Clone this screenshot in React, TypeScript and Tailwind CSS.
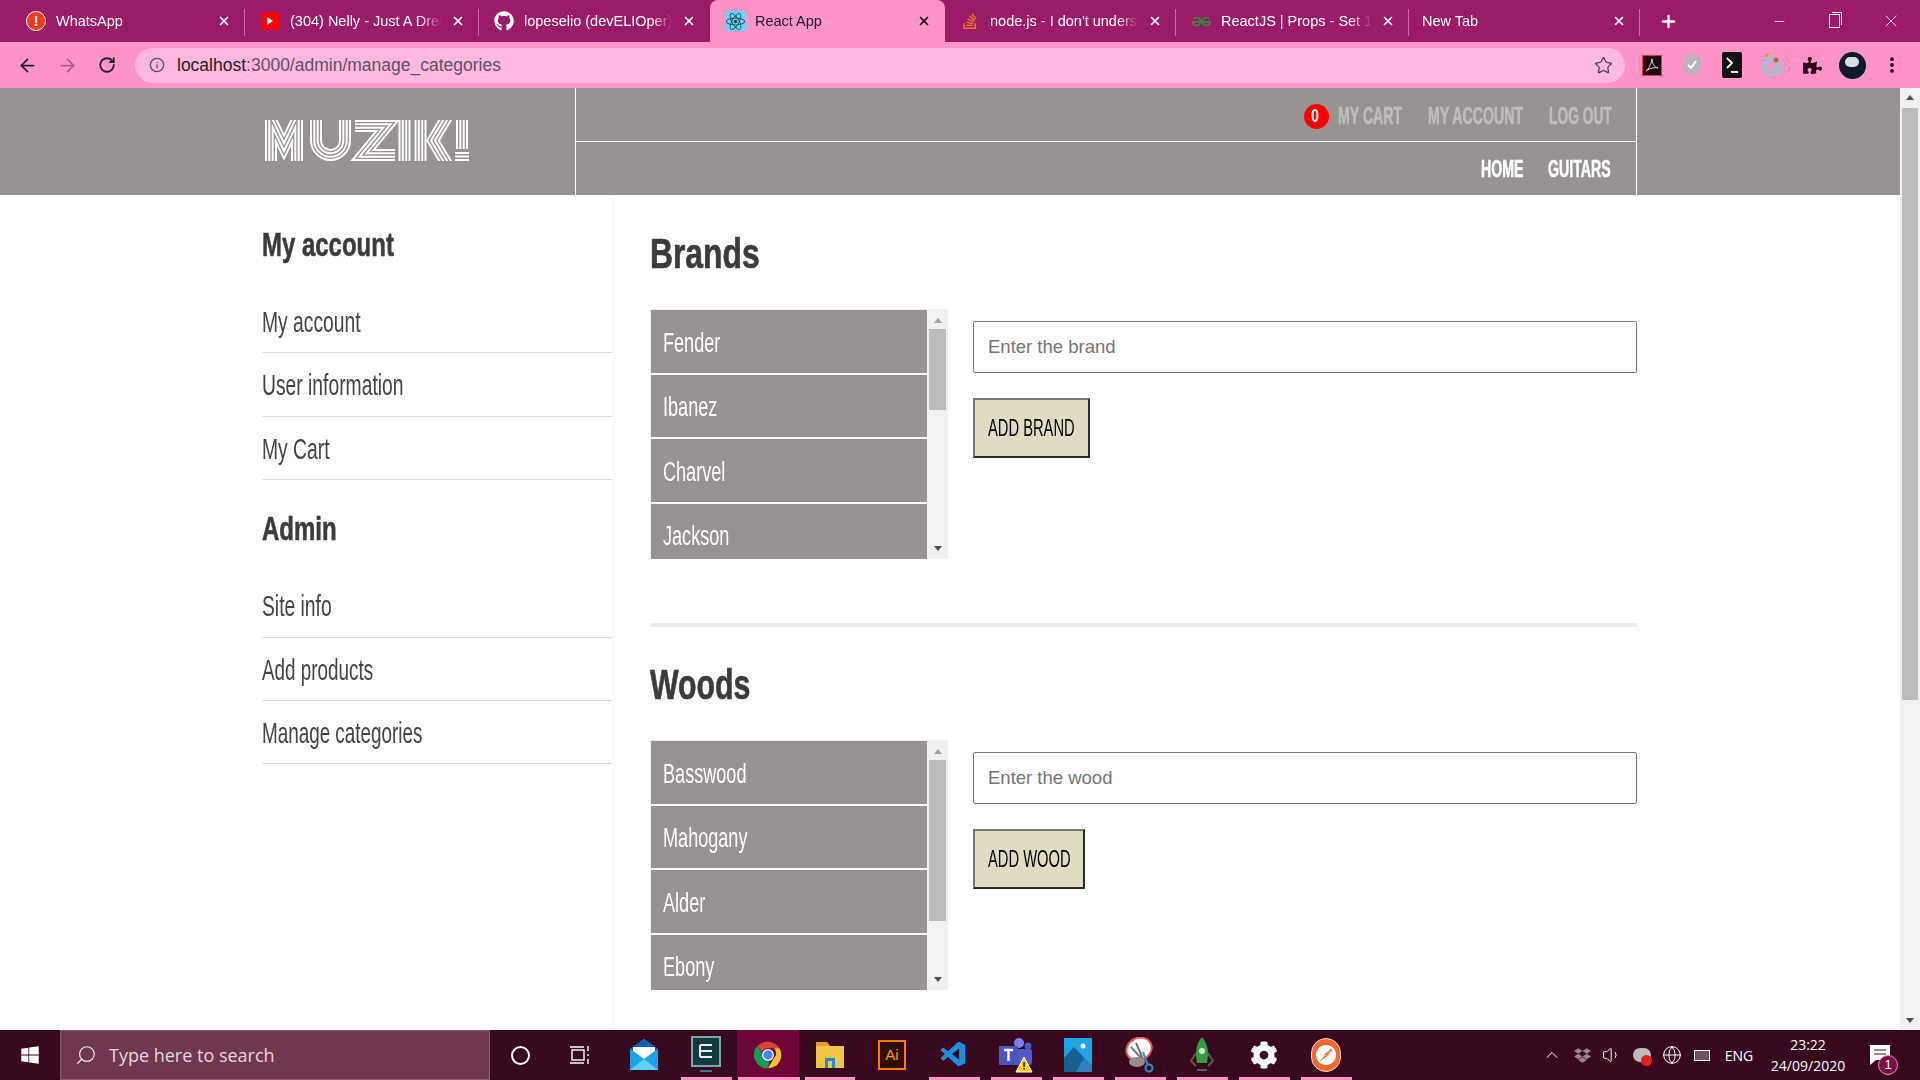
import React from "react";
import { FaGithub, FaReact, FaStackOverflow, FaPuzzlePiece, FaWindows, FaCog, FaDropbox } from "react-icons/fa";
import { SiGeeksforgeeks, SiPostman } from "react-icons/si";
import { VscVscode } from "react-icons/vsc";
import { Minus, X, Plus, ArrowLeft, ArrowRight, RotateCw, Info, Star, Search, ChevronUp, Volume1, Globe, EllipsisVertical } from "lucide-react";

const Logo = () => {
  const widths = [
    ["#ffffff", 12],
    ["#979390", 8],
    ["#ffffff", 5.4],
    ["#979390", 1.4],
  ] as const;
  const d = "M9 45 V0 L22 27 L35 0 V45 M54 -2 V20.5 a14.5 14.5 0 0 0 29 0 V-2 M93 6 H125 L101 35 H133 M142.5 -2 V45 M158.5 -2 V45 M185 -3 L171 20.5 L185 44 M200 -2 V29";
  return (
    <svg width="210" height="41" viewBox="0 0 210 41" className="block" role="img" aria-label="MUZIK!">
      {widths.map(([c, w], i) => (
        <path key={i} d={d} fill="none" stroke={c} strokeWidth={w} strokeMiterlimit={10} />
      ))}
      <rect x="193" y="32" width="14" height="2" fill="#fff" />
      <rect x="193" y="35.5" width="14" height="2" fill="#fff" />
      <rect x="193" y="39" width="14" height="2" fill="#fff" />
    </svg>
  );
};

const Sq = ({ c, children }: { c: string; children: React.ReactNode }) => (
  <span className={`inline-block origin-left whitespace-nowrap ${c}`}>{children}</span>
);

const Nav = ({ w, s = "scale-x-[0.615]", children }: { w: string; s?: string; children: React.ReactNode }) => (
  <span className={`${w} block shrink-0 whitespace-nowrap`}>
    <Sq c={s}>{children}</Sq>
  </span>
);

const Tab = ({ icon, label, active, sep = true, w = "w-[234px]" }: { icon?: React.ReactNode; label: string; active?: boolean; sep?: boolean; w?: string }) => (
  <div className={`${w} relative h-full flex items-center shrink-0 ${icon ? "pl-[15px]" : "pl-[13px]"} pr-[14px] ${active ? "bg-[#ff94c9] rounded-t-lg text-[#1b1b1b]" : "text-white"}`}>
    {icon && <span className="w-[20px] h-[20px] flex items-center justify-center shrink-0 mr-[10px]">{icon}</span>}
    <span className="flex-1 min-w-0 overflow-hidden whitespace-nowrap text-[14.5px] pt-[1px] [mask-image:linear-gradient(to_right,black_84%,transparent_98%)]">{label}</span>
    <X size={14} strokeWidth={3} className="shrink-0 ml-[6px]" color={active ? "#111" : "#fff"} />
    {sep && <span className="absolute right-0 top-[9px] bottom-[6px] w-px bg-[#c96ea3]" />}
  </div>
);

const ToolIcon = ({ children, w = "w-[40px]" }: { children: React.ReactNode; w?: string }) => (
  <div className={`${w} h-full shrink-0 flex items-center justify-center`}>{children}</div>
);

const SideItem = ({ children, s = "scale-x-[0.665]" }: { children: React.ReactNode; s?: string }) => (
  <div className="h-[63.4px] flex items-center pt-[3px] border-b border-[#dddddd] text-[#444444] text-[29px]">
    <Sq c={s}>{children}</Sq>
  </div>
);

const Section = ({ title, items, placeholder, button, btnW, thumbH, thumbTop, divider, titleScale }: { title: string; items: string[]; placeholder: string; button: string; btnW: string; thumbH: string; thumbTop: string; divider?: boolean; titleScale: string }) => (
  <div className={divider ? "border-b-[4px] border-[#eeeeee] h-[400px]" : ""}>
    <h1 className="h-[52px] text-[43px] leading-[53px] font-bold text-[#3b3b3b] [-webkit-text-stroke:0.7px_#3b3b3b]">
      <Sq c={titleScale}>{title}</Sq>
    </h1>
    <div className="flex mt-[30px]">
      <div className="w-[298px] h-[250px] flex overflow-hidden border-l border-t border-[#f1f1f1] shrink-0">
        <div className="w-[276px] flex flex-col gap-[2px] overflow-hidden">
          {items.map((t) => (
            <div key={t} className="h-[62.5px] shrink-0 bg-[#979390] text-white text-[27px] pl-[12px] pt-[3px] flex items-center">
              <Sq c="scale-x-[0.67]">{t}</Sq>
            </div>
          ))}
        </div>
        <div className="w-[21px] bg-[#f1f1f1] relative flex flex-col items-center justify-between py-[8px]">
          <span className="w-0 h-0 border-x-[4px] border-x-transparent border-b-[5px] border-b-[#a3a3a3]" />
          <span className="w-0 h-0 border-x-[4px] border-x-transparent border-t-[5px] border-t-[#505050]" />
          <span className={`absolute left-[2px] w-[17px] bg-[#bcbcbc] ${thumbH} ${thumbTop}`} />
        </div>
      </div>
      <div className="ml-[25px] flex-1 pt-[12px]">
        <div className="h-[52px] border border-[#767676] rounded-[2px] flex items-center pl-[14px] text-[#757575] text-[18.5px]">{placeholder}</div>
        <button className={`mt-[25px] block h-[60px] ${btnW} pl-[13px] text-left bg-[#e0dcc4] border-2 border-t-[#767676] border-l-[#767676] border-r-[#2a2a2a] border-b-[#2a2a2a] text-black text-[23px]`}>
          <Sq c="scale-x-[0.64]">{button}</Sq>
        </button>
      </div>
    </div>
  </div>
);

const Mail = () => (
  <svg width="34" height="34" viewBox="0 0 34 34"><path d="M3 11 L17 1 L31 11 V32 H3Z" fill="#1aa3e8" /><path d="M3 11 L17 1 L31 11 L17 21Z" fill="#0a5fb0" /><path d="M6 9 H28 V13 L17 21 L6 13Z" fill="#fff" /><path d="M3 32 L17 21 L31 32Z" fill="#5fd0f5" /></svg>
);
const Screen = () => (
  <svg width="30" height="38" viewBox="0 0 30 38"><rect x="1" y="1" width="28" height="29" fill="#0e3a40" stroke="#7fa5a8" strokeWidth="2" /><path d="M9 9 H21 M9 15 H21 M9 21 H21 M9 9 V21" stroke="#e6eeee" strokeWidth="2" fill="none" /><rect x="9" y="34" width="12" height="2" fill="#3f8088" /></svg>
);
const Chrome = () => (
  <svg width="32" height="34" viewBox="0 0 48 48"><path d="M24 4a20 20 0 0 1 17.3 10H24a10 10 0 0 0-9 5.7L8.4 10.3A20 20 0 0 1 24 4Z" fill="#db4437" /><path d="M41.3 14A20 20 0 0 1 24 44l8.7-15A10 10 0 0 0 33 14Z" fill="#fbc02d" /><path d="M24 44A20 20 0 0 1 8.4 10.3L15 21.7a10 10 0 0 0 11 12L24 44Z" fill="#0f9d58" /><circle cx="24" cy="24" r="8" fill="#4285f4" stroke="#fff" strokeWidth="2" /></svg>
);
const Folder = () => (
  <svg width="30" height="28" viewBox="0 0 30 28"><path d="M1 1 H12 L15 5 H29 V27 H1Z" fill="#f3c544" /><path d="M1 1 H12 L15 5 H1Z" fill="#e0a020" /><path d="M10 27 V17 H20 V27 H17 V20 H13 V27Z" fill="#1b8fd6" /></svg>
);
const Ai = () => (
  <div className="w-[28px] h-[30px] bg-[#2f1000] border-2 border-[#ff7c00] text-[#ff9a00] text-[15px] leading-[26px] text-center">Ai</div>
);
const Teams = () => (
  <svg width="34" height="36" viewBox="0 0 34 36"><circle cx="20" cy="6" r="5" fill="#7b83eb" /><circle cx="29" cy="9" r="3.5" fill="#5059c9" /><rect x="13" y="12" width="20" height="16" rx="2" fill="#5059c9" /><rect x="0" y="9" width="19" height="19" rx="1" fill="#4b53bc" /><path d="M5 13 H14 M9.5 13 V24" stroke="#fff" strokeWidth="2.4" /><path d="M25 20 L33 35 H17Z" fill="#ffd400" stroke="#fff" strokeWidth="1" /><rect x="24.3" y="25" width="1.6" height="5" fill="#222" /><rect x="24.3" y="31" width="1.6" height="1.6" fill="#222" /></svg>
);
const Photos = () => (
  <svg width="28" height="34" viewBox="0 0 28 34"><rect width="28" height="34" fill="#1ea5e6" /><path d="M0 34 V20 L10 9 L28 28 V34Z" fill="#17608f" /><path d="M12 34 L20 20 L28 28 V34Z" fill="#2e7fbd" /><circle cx="19" cy="8" r="2.5" fill="#fff" /></svg>
);
const Snip = () => (
  <svg width="32" height="36" viewBox="0 0 32 36"><ellipse cx="15" cy="12" rx="13" ry="11" fill="#fff" stroke="#e25555" strokeWidth="2" transform="rotate(-25 15 12)" /><path d="M7 10 L18 22 M12 6 L19 22" stroke="#777" strokeWidth="2" /><ellipse cx="13" cy="25" rx="8" ry="5" fill="#9a8c8c" /><path d="M19 15 L24 28" stroke="#2a8fd0" strokeWidth="2" /><circle cx="25" cy="31" r="3.5" fill="none" stroke="#2a8fd0" strokeWidth="2" /></svg>
);
const Rocket = () => (
  <svg width="24" height="38" viewBox="0 0 24 38"><path d="M12 1 C18 8 19 16 17 27 H7 C5 16 6 8 12 1Z" fill="#2f9e44" /><circle cx="12" cy="15" r="3" fill="#c8f0c8" /><path d="M6 17 L1 25 L6 30 M18 17 L23 25 L18 30" stroke="#5e5a4c" strokeWidth="2" fill="none" /><rect x="7" y="33" width="10" height="2" fill="#66565c" /></svg>
);

const pinks = [
  "ml-[681px] w-[51px]", "ml-[6px] w-[62px]", "ml-[5px] w-[50px]", "ml-[74px] w-[51px]", "ml-[11px] w-[51px]", "ml-[11px] w-[51px]", "ml-[11px] w-[51px]", "ml-[11px] w-[51px]", "ml-[11px] w-[51px]", "ml-[11px] w-[51px]",
];

const Task = ({ children, active }: { children: React.ReactNode; active?: boolean }) => (
  <div className={`w-[62px] h-full shrink-0 flex items-center justify-center ${active ? "bg-[#6d0535]" : ""}`}>{children}</div>
);

export default function App() {
  return (
    <div className="w-[1920px] h-[1080px] overflow-hidden flex flex-col bg-white font-['Liberation_Sans',sans-serif]">
      {/* tabs */}
      <div className="h-[42px] shrink-0 bg-[#9b1b66] flex pl-[11px]">
        <div className="flex h-full">
          <Tab label="WhatsApp" icon={<span className="w-[20px] h-[20px] rounded-full bg-[#ea3c1c] border border-white text-white text-[14px] font-bold flex items-center justify-center leading-none">!</span>} />
          <Tab label="(304) Nelly - Just A Dream" icon={<span className="w-[18px] h-[18px] rounded-[3px] bg-[#f00] flex items-center justify-center"><span className="w-0 h-0 border-y-[4px] border-y-transparent border-l-[6px] border-l-white" /></span>} />
          <Tab label="lopeselio (devELIOper)" sep={false} w="w-[231px]" icon={<FaGithub size={20} color="#fff" />} />
          <Tab label="React App" active sep={false} w="w-[235px]" icon={<span className="w-[20px] h-[20px] bg-[#5fd8f5] flex items-center justify-center"><FaReact size={19} color="#22424c" /></span>} />
          <Tab label="node.js - I don't understand" w="w-[231px]" icon={<FaStackOverflow size={18} color="#e87922" />} />
          <Tab label="ReactJS | Props - Set 1 - GeeksforGeeks" w="w-[233px]" icon={<SiGeeksforgeeks size={19} color="#2f8d46" />} />
          <Tab label="New Tab" w="w-[231px]" />
        </div>
        <div className="h-full w-[56px] flex items-center justify-center"><Plus size={19} strokeWidth={3} color="#fff" /></div>
        <div className="flex-1" />
        <div className="h-full flex items-center text-white">
          <div className="w-[54px] flex justify-center"><Minus size={15} strokeWidth={1.2} /></div>
          <div className="w-[56px] flex justify-center"><span className="relative block w-[11px] h-[14px] border border-white"><span className="absolute -top-[3px] left-[2px] w-[10px] h-[13px] border-t border-r border-white" /></span></div>
          <div className="w-[58px] flex justify-center"><X size={20} strokeWidth={1} /></div>
        </div>
      </div>
      {/* toolbar */}
      <div className="h-[46px] shrink-0 bg-[#ff94c9] flex items-center pl-[7px]">
        <ToolIcon><ArrowLeft size={21} strokeWidth={2} color="#222" /></ToolIcon>
        <ToolIcon><ArrowRight size={21} strokeWidth={2} color="#a8608a" /></ToolIcon>
        <ToolIcon><RotateCw size={18} strokeWidth={2.4} color="#222" /></ToolIcon>
        <div className="ml-[8px] w-[1490px] h-[35px] rounded-full bg-[#ffb9df] flex items-center pl-[14px] pr-[12px]">
          <Info size={16} color="#555" />
          <span className="ml-[12px] text-[17.5px] text-[#222]">localhost<span className="text-[#5d5266]">:3000/admin/manage_categories</span></span>
          <div className="flex-1" />
          <Star size={19} strokeWidth={1.6} color="#444" />
        </div>
        <div className="flex h-full items-center ml-[7px]">
          <ToolIcon><span className="w-[20px] h-[21px] bg-[#1d0a0c] border border-[#e33] flex items-center justify-center"><svg width="14" height="14" viewBox="0 0 14 14"><path d="M7 1 C6 6 4 11 1 13 C5 10 10 9 13 10 C9 9 7 5 7 1Z" fill="none" stroke="#ddd" /></svg></span></ToolIcon>
          <ToolIcon><svg width="20" height="24" viewBox="0 0 20 24"><path d="M10 1 L19 4 V12 C19 18 14 22 10 23 C6 22 1 18 1 12 V4Z" fill="#bcb2b7" /><path d="M6 12 L9 15 L14 8" stroke="#fff" strokeWidth="2" fill="none" /></svg></ToolIcon>
          <ToolIcon><span className="w-[20px] h-[26px] bg-[#111] rounded-[2px] flex items-center justify-center"><svg width="14" height="20" viewBox="0 0 14 20"><path d="M2 3 L7 8 L2 13" stroke="#fff" strokeWidth="1.8" fill="none" /><path d="M6 17 H13" stroke="#fff" strokeWidth="1.8" /></svg></span></ToolIcon>
          <ToolIcon><svg width="22" height="28" viewBox="0 0 22 28"><circle cx="11" cy="15" r="9" fill="none" stroke="#7fd6c4" strokeWidth="2" /><circle cx="11" cy="15" r="5" fill="none" stroke="#7fd6c4" strokeWidth="2" /><circle cx="6" cy="4" r="2" fill="#f0a030" /><circle cx="15" cy="9" r="2.5" fill="#e0503a" /></svg></ToolIcon>
          <ToolIcon><FaPuzzlePiece size={19} color="#2c0a18" /></ToolIcon>
          <ToolIcon><span className="w-[27px] h-[27px] rounded-full bg-[#101a25] flex items-center justify-center overflow-hidden"><span className="w-[14px] h-[10px] rounded-full bg-[#d7dfe5] -mt-[6px]" /></span></ToolIcon>
          <ToolIcon><EllipsisVertical size={20} strokeWidth={2.6} color="#2c0a18" /></ToolIcon>
        </div>
      </div>
      {/* page */}
      <div className="flex-1 min-h-0 flex">
        <div className="flex-1 min-w-0 flex flex-col overflow-hidden">
          <header className="h-[107px] shrink-0 bg-[#979390] flex pl-[262px]">
            <div className="w-[313px] pt-[32px]"><Logo /></div>
            <div className="w-[1062px] border-x border-white flex flex-col font-bold text-[23px] uppercase [-webkit-text-stroke:0.6px]">
              <div className="h-[54px] border-b border-white flex items-center justify-end pr-[24px] pt-[4px] gap-[24px] text-[#bdbdbd]">
                <div className="flex items-center gap-[9px]">
                  <span className="w-[25px] h-[25px] rounded-full bg-[#ff0000] text-white text-[19px] [-webkit-text-stroke:0] flex items-center justify-center"><Sq c="origin-center scale-x-[0.75]">0</Sq></span>
                  <Nav w="w-[66px]">My Cart</Nav>
                </div>
                <Nav w="w-[97px]">My Account</Nav>
                <Nav w="w-[63px]" s="scale-x-[0.6]">Log Out</Nav>
              </div>
              <div className="flex-1 flex items-center justify-end pr-[24px] pt-[2px] gap-[25px] text-white">
                <Nav w="w-[42px]">Home</Nav>
                <Nav w="w-[64px]">Guitars</Nav>
              </div>
            </div>
          </header>
          <main className="flex-1 min-h-0 flex pl-[262px]">
            <aside className="w-[351px] shrink-0 border-r border-[#f4f4f4] pt-[25px]">
              <h2 className="h-[48px] leading-[48px] text-[34px] font-bold text-[#3b3b3b] [-webkit-text-stroke:0.6px_#3b3b3b]"><Sq c="scale-x-[0.705]">My account</Sq></h2>
              <div className="mt-[22px]">
                <SideItem>My account</SideItem>
                <SideItem>User information</SideItem>
                <SideItem>My Cart</SideItem>
              </div>
              <h2 className="mt-[23px] h-[50px] leading-[50px] text-[34px] font-bold text-[#3b3b3b] [-webkit-text-stroke:0.6px_#3b3b3b]"><Sq c="scale-x-[0.705]">Admin</Sq></h2>
              <div className="mt-[21px]">
                <SideItem>Site info</SideItem>
                <SideItem s="scale-x-[0.65]">Add products</SideItem>
                <SideItem s="scale-x-[0.65]">Manage categories</SideItem>
              </div>
            </aside>
            <div className="w-[1024px] shrink-0 pl-[37px] pt-[32px]">
              <Section divider title="Brands" titleScale="scale-x-[0.74]" items={["Fender", "Ibanez", "Charvel", "Jackson", "Gibson"]} placeholder="Enter the brand" button="ADD BRAND" btnW="w-[117px]" thumbH="h-[81px]" thumbTop="top-[19px]" />
              <div className="pt-[31px]">
                <Section title="Woods" titleScale="scale-x-[0.705]" items={["Basswood", "Mahogany", "Alder", "Ebony", "Maple"]} placeholder="Enter the wood" button="ADD WOOD" btnW="w-[112px]" thumbH="h-[161px]" thumbTop="top-[19px]" />
              </div>
            </div>
          </main>
        </div>
        {/* page scrollbar */}
        <div className="w-[20px] shrink-0 bg-[#f1f1f1] relative flex flex-col items-center justify-between py-[7px]">
          <span className="w-0 h-0 border-x-[4px] border-x-transparent border-b-[5px] border-b-[#505050]" />
          <span className="w-0 h-0 border-x-[4px] border-x-transparent border-t-[5px] border-t-[#505050]" />
          <span className="absolute left-[2px] top-[20px] w-[16px] h-[592px] bg-[#bcbcbc]" />
        </div>
      </div>
      {/* taskbar */}
      <div className="h-[50px] shrink-0 bg-[#38081f] relative flex items-center text-white">
        <div className="w-[60px] h-full flex items-center justify-center"><FaWindows size={20} color="#fff" /></div>
        <div className="w-[430px] h-full bg-[#6f3750] border border-[#8a5a70] flex items-center pl-[14px] text-[#e6d6de] text-[18px] font-['Open_Sans',sans-serif]">
          <Search size={22} strokeWidth={1.3} className="-scale-x-100" color="#eee" />
          <span className="ml-[12px]">Type here to search</span>
        </div>
        <div className="w-[60px] flex justify-center"><span className="w-[19px] h-[19px] rounded-full border-2 border-white" /></div>
        <div className="w-[60px] flex justify-center"><svg width="20" height="20" viewBox="0 0 20 20" fill="none" stroke="#fff" strokeWidth="1.4"><rect x="2" y="5" width="12" height="10" /><path d="M0 2 H14 M0 18 H14 M18 1 V6 M18 9 V11 M18 14 V19" /></svg></div>
        <div className="flex h-full ml-[3px]">
          <Task><Mail /></Task>
          <Task><Screen /></Task>
          <Task active><Chrome /></Task>
          <Task><Folder /></Task>
          <Task><Ai /></Task>
          <Task><VscVscode size={30} color="#1c8fe0" /></Task>
          <Task><Teams /></Task>
          <Task><Photos /></Task>
          <Task><Snip /></Task>
          <Task><Rocket /></Task>
          <Task><FaCog size={28} color="#fff" /></Task>
          <Task><span className="w-[30px] h-[34px] rounded-full bg-[#f2682f] border border-[#ffd9c8] flex items-center justify-center"><SiPostman size={20} color="#fff" /></span></Task>
        </div>
        <div className="flex-1" />
        <div className="flex items-center h-full text-[14px]">
          <div className="w-[30px] flex justify-center"><ChevronUp size={20} strokeWidth={1.2} /></div>
          <div className="w-[30px] flex justify-center"><FaDropbox size={17} color="#9c8590" /></div>
          <div className="w-[30px] flex justify-center"><Volume1 size={20} strokeWidth={1.2} /></div>
          <div className="w-[30px] flex justify-center"><span className="relative w-[18px] h-[14px] rounded-full bg-[#bbb]"><span className="absolute -right-[1px] -bottom-[4px] w-[11px] h-[11px] rounded-full bg-[#e02020]" /></span></div>
          <div className="w-[30px] flex justify-center"><Globe size={20} strokeWidth={1.2} /></div>
          <div className="w-[30px] flex justify-center"><span className="w-[16px] h-[11px] border border-white bg-white/30" /></div>
          <div className="w-[41px] pl-[3px] text-center font-['Open_Sans',sans-serif] text-[14px]">ENG</div>
          <div className="w-[100px] flex flex-col items-center leading-[21px] font-['Open_Sans',sans-serif] text-[14px]"><span>23:22</span><span>24/09/2020</span></div>
          <div className="w-[62px] relative flex justify-start pl-[12px]">
            <svg width="20" height="20" viewBox="0 0 20 20"><path d="M0 0 H20 V15 H6 L0 20Z" fill="#fff" /><path d="M4 5 H16 M4 9 H16" stroke="#38081f" /></svg>
            <span className="absolute left-[20px] top-[10px] w-[20px] h-[20px] rounded-full bg-[#7c0e44] border border-[#d9a] text-[13px] leading-[18px] text-center">1</span>
          </div>
        </div>
        <div className="absolute left-0 right-0 bottom-0 h-[3px] flex pointer-events-none">
          {pinks.map((c, i) => (
            <span key={i} className={`${c} h-full bg-[#ff94c9]`} />
          ))}
        </div>
      </div>
    </div>
  );
}
